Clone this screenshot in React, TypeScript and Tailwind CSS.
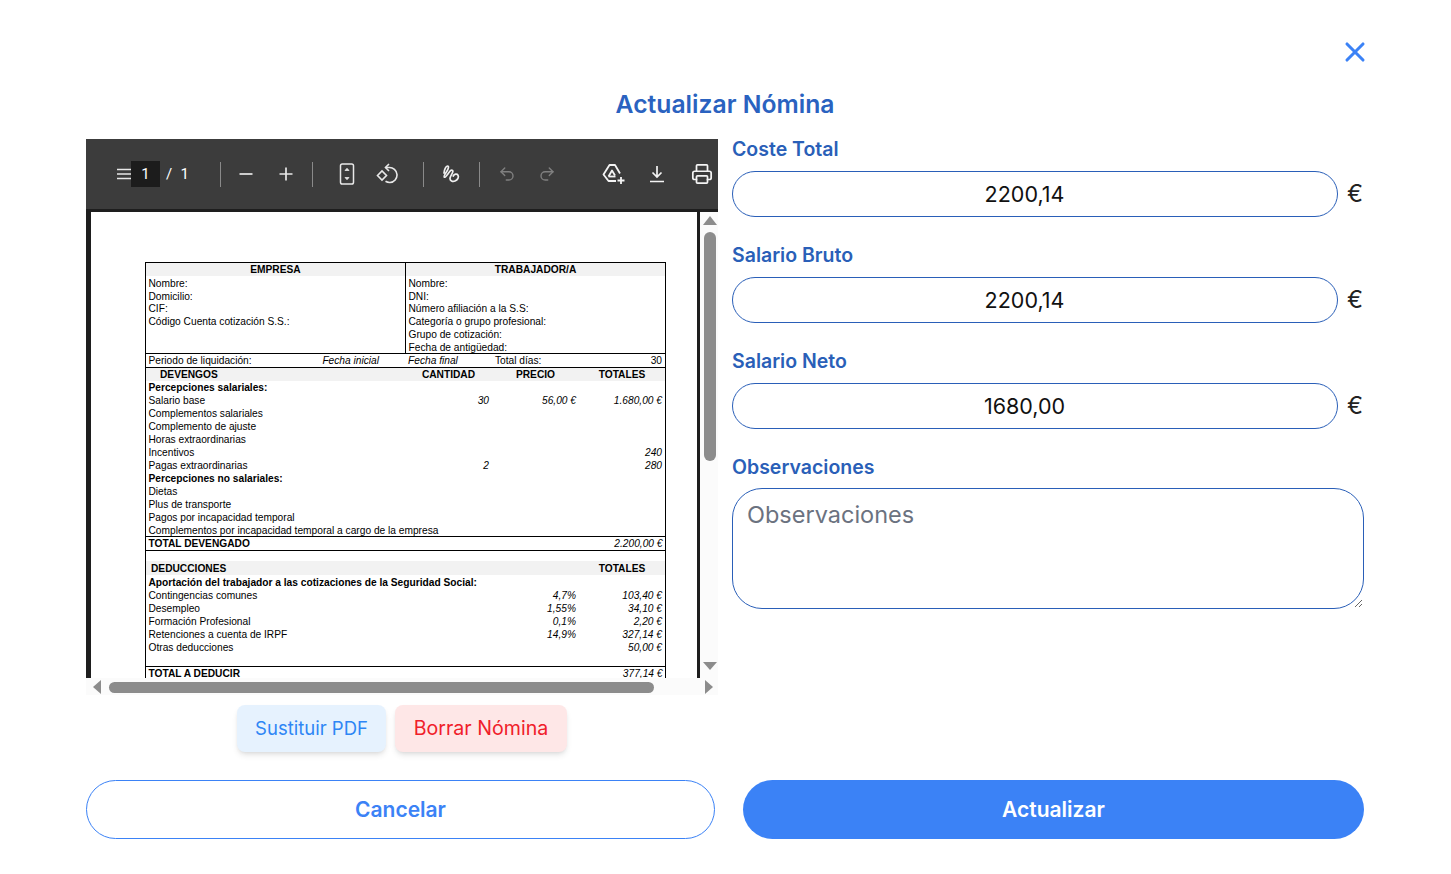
import { Printer, Redo2, Undo2, X } from 'lucide-react';

const UI_FONT = 'font-["Inter","Noto_Sans",sans-serif]';

const earnings: [string, boolean, string, string, string][] = [
  ['Percepciones salariales:', true, '', '', ''],
  ['Salario base', false, '30', '56,00 €', '1.680,00 €'],
  ['Complementos salariales', false, '', '', ''],
  ['Complemento de ajuste', false, '', '', ''],
  ['Horas extraordinarias', false, '', '', ''],
  ['Incentivos', false, '', '', '240'],
  ['Pagas extraordinarias', false, '2', '', '280'],
  ['Percepciones no salariales:', true, '', '', ''],
  ['Dietas', false, '', '', ''],
  ['Plus de transporte', false, '', '', ''],
  ['Pagos por incapacidad temporal', false, '', '', ''],
  ['Complementos por incapacidad temporal a cargo de la empresa', false, '', '', ''],
];

const deductions: [string, boolean, string, string][] = [
  ['Aportación del trabajador a las cotizaciones de la Seguridad Social:', true, '', ''],
  ['Contingencias comunes', false, '4,7%', '103,40 €'],
  ['Desempleo', false, '1,55%', '34,10 €'],
  ['Formación Profesional', false, '0,1%', '2,20 €'],
  ['Retenciones a cuenta de IRPF', false, '14,9%', '327,14 €'],
  ['Otras deducciones', false, '', '50,00 €'],
];

function PayRow({ label, bold, a, b, c }: { label: string; bold?: boolean; a?: string; b?: string; c?: string }) {
  return (
    <div className="grid h-[13px] grid-cols-[259px_87px_87px_86px] items-center leading-[13px]">
      <span className={`pl-[2.5px] whitespace-nowrap ${bold ? 'font-bold' : ''}`}>{label}</span>
      <span className="pr-[3px] text-right italic">{a}</span>
      <span className="pr-[3px] text-right italic">{b}</span>
      <span className="pr-[3px] text-right italic">{c}</span>
    </div>
  );
}

function Payslip() {
  return (
    <div className='ml-[54px] mt-[50px] w-[521px] border border-black font-["Liberation_Sans",Arial,sans-serif] text-[10.2px] text-black'>
      <div className="grid grid-cols-[260px_259px]">
        <div className="border-r border-black">
          <div className="h-[13px] bg-[#f2f2f2] text-center font-bold leading-[13px]">EMPRESA</div>
          <div className="h-[77px] pt-[2px] pl-[2.5px] leading-[12.7px]">
            <p>Nombre:</p>
            <p>Domicilio:</p>
            <p>CIF:</p>
            <p>Código Cuenta cotización S.S.:</p>
          </div>
        </div>
        <div>
          <div className="h-[13px] bg-[#f2f2f2] text-center font-bold leading-[13px]">TRABAJADOR/A</div>
          <div className="h-[77px] pt-[2px] pl-[2.5px] leading-[12.7px]">
            <p>Nombre:</p>
            <p>DNI:</p>
            <p>Número afiliación a la S.S:</p>
            <p>Categoría o grupo profesional:</p>
            <p>Grupo de cotización:</p>
            <p>Fecha de antigüedad:</p>
          </div>
        </div>
      </div>
      <div className="grid h-[14px] grid-cols-[259px_87px_87px_86px] items-center border-t border-black leading-[13px]">
        <div className="flex justify-between pr-[26px] pl-[2.5px]">
          <span>Periodo de liquidación:</span>
          <span className="italic">Fecha inicial</span>
        </div>
        <span className="pl-[3px] italic">Fecha final</span>
        <span className="pl-[3px]">Total días:</span>
        <span className="pr-[3px] text-right">30</span>
      </div>
      <div className="grid h-[14px] grid-cols-[259px_87px_87px_86px] items-center border-t border-black bg-[#f2f2f2] font-bold leading-[13px]">
        <span className="pl-[14px]">DEVENGOS</span>
        <span className="text-center">CANTIDAD</span>
        <span className="text-center">PRECIO</span>
        <span className="text-center">TOTALES</span>
      </div>
      <div className="h-[155px]">
        {earnings.map(([label, bold, a, b, c]) => (
          <PayRow key={label} label={label} bold={bold} a={a} b={b} c={c} />
        ))}
      </div>
      <div className="box-content flex h-[13px] items-center justify-between border-y border-black px-[2.5px] leading-[12px]">
        <span className="font-bold">TOTAL DEVENGADO</span>
        <span className="italic">2.200,00 €</span>
      </div>
      <div className="mt-[10px] grid h-[14px] grid-cols-[259px_87px_87px_86px] items-center bg-[#f2f2f2] font-bold leading-[13px]">
        <span className="pl-[5px]">DEDUCCIONES</span>
        <span />
        <span />
        <span className="text-center">TOTALES</span>
      </div>
      <div className="h-[91px] pt-[1px]">
        {deductions.map(([label, bold, b, c]) => (
          <PayRow key={label} label={label} bold={bold} b={b} c={c} />
        ))}
      </div>
      <div className="box-content flex h-[13px] items-center justify-between border-t border-black px-[2.5px] leading-[12px]">
        <span className="font-bold">TOTAL A DEDUCIR</span>
        <span className="italic">377,14 €</span>
      </div>
    </div>
  );
}

function ToolButton({ className = '', children }: { className?: string; children: React.ReactNode }) {
  return <div className={`flex h-[26px] w-[40px] shrink-0 items-center justify-center ${className}`}>{children}</div>;
}

function Separator({ className = '' }: { className?: string }) {
  return <div className={`h-[25px] w-px shrink-0 bg-[#8a8a8a] ${className}`} />;
}

function PdfToolbar() {
  return (
    <div className='flex h-[70px] shrink-0 items-center overflow-hidden bg-[#3c3c3c] pl-[31px] font-["Roboto",sans-serif] text-[15px] text-white'>
      <svg width="14" height="12" viewBox="0 0 14 12" className="shrink-0" stroke="#e8e8e8" strokeWidth="1.6">
        <path d="M0 1.5h14M0 6h14M0 10.500h14" />
      </svg>
      <div className="flex h-[26px] w-[29px] shrink-0 items-center justify-center bg-[#1c1c1c]">1</div>
      <div className="flex w-[30px] shrink-0 justify-between pr-[1px] pl-[6px]">
        <span>/</span>
        <span>1</span>
      </div>
      <Separator className="ml-[30px]" />
      <ToolButton className="ml-[5px]">
        <svg width="14" height="14" viewBox="0 0 14 14" stroke="#e8e8e8" strokeWidth="1.7">
          <path d="M0.500 7h13" />
        </svg>
      </ToolButton>
      <ToolButton>
        <svg width="14" height="14" viewBox="0 0 14 14" stroke="#e8e8e8" strokeWidth="1.7">
          <path d="M0.500 7h13M7 0.500v13" />
        </svg>
      </ToolButton>
      <Separator className="ml-[6px] w-[2px]" />
      <ToolButton className="ml-[14px]">
        <svg width="16" height="22" viewBox="0 0 16 22" fill="none" stroke="#e8e8e8" strokeWidth="1.5">
          <rect x="1.500" y="1" width="13" height="20" rx="1.800" />
          <path d="M6 7.500l2-2.200 2 2.200zM6 14.500l2 2.200 2-2.200z" fill="#e8e8e8" strokeWidth="0.800" />
        </svg>
      </ToolButton>
      <ToolButton>
        <svg width="22" height="22" viewBox="0 0 22 22" fill="none" stroke="#e8e8e8" strokeWidth="1.6">
          <path d="M1.500 12.500l4.500-4.500 4.500 4.500-4.500 4.500z" />
          <path d="M9.500 4.500h3.500a7.500 7.500 0 0 1 1 15 8 8 0 0 1-4.500-1.200" />
          <path d="M13 1l-3.500 3.500 3.500 3.500" />
        </svg>
      </ToolButton>
      <Separator className="ml-[16px]" />
      <ToolButton className="ml-[8px]">
        <svg width="20" height="20" viewBox="0 0 20 20" fill="none" stroke="#f0f0f0" strokeWidth="1.700" strokeLinecap="round" strokeLinejoin="round">
          <path d="M2 9c.2-3 1.800-7 3.500-7 1.800 0 .8 3.200-.8 5.500C3 10 1.500 12.500 2.300 13.200c1.200.8 3.500-3.500 5.700-6 1.500-1.500 3.300-1.300 2.800.7-.5 2-2.800 4.500-2.800 6.600 0 2.200 2.500 3.500 5 2.500 2.500-1 4.200-3.800 3-5.800-1-1.700-3.800-1.200-4.800.8" />
        </svg>
      </ToolButton>
      <Separator className="ml-[7px]" />
      <ToolButton className="ml-[7px]">
        <Undo2 size={18} color="#808080" strokeWidth={1.8} />
      </ToolButton>
      <ToolButton>
        <Redo2 size={18} color="#808080" strokeWidth={1.8} />
      </ToolButton>
      <ToolButton className="ml-[26px]">
        <svg width="23" height="21" viewBox="0 0 23 21" fill="none" stroke="#f4f4f4" strokeWidth="1.800" strokeLinejoin="round">
          <path d="M14 17H6.500L1.500 10.500 7.500 1h5.500l5 8.500" />
          <path d="M6.500 12.500l3.500-6 3 5" />
          <path d="M6.500 12.500h7" />
          <path d="M19 13v7M15.500 16.500h7" />
        </svg>
      </ToolButton>
      <ToolButton className="ml-[4px]">
        <svg width="18" height="18" viewBox="0 0 18 18" fill="none" stroke="#f4f4f4" strokeWidth="1.700">
          <path d="M9 1v10.500M4.500 7.500L9 12l4.500-4.500M2 16.500h14" />
        </svg>
      </ToolButton>
      <ToolButton className="ml-[5px]">
        <Printer size={22} color="#f4f4f4" strokeWidth={1.9} />
      </ToolButton>
    </div>
  );
}

function PdfViewer() {
  return (
    <div className="flex h-[556px] w-[632px] flex-col">
      <PdfToolbar />
      <div className="h-[3px] shrink-0 bg-[#1e1e1e]" />
      <div className="flex h-[466px] shrink-0">
        <div className="flex h-[466px] w-[614px] shrink-0 border-x-[#1e1e1e] border-r-[3px] border-l-[5px]">
          <div className="w-full overflow-hidden bg-white">
            <Payslip />
          </div>
        </div>
        <div className="flex w-[18px] flex-col items-center bg-[#fbfbfb] pt-[4px] pl-[2px]">
          <div className="h-0 w-0 border-x-[7px] border-b-[9px] border-x-transparent border-b-[#8c8c8c]" />
          <div className="mt-[7px] h-[229px] w-[12px] rounded-full bg-[#8c8c8c]" />
          <div className="mt-[201px] h-0 w-0 border-x-[7px] border-t-[8px] border-x-transparent border-t-[#8c8c8c]" />
        </div>
      </div>
      <div className="flex h-[17px] shrink-0 items-center bg-[#fbfbfb] pt-[1px] pl-[7px]">
        <div className="h-0 w-0 border-y-[7px] border-r-[8px] border-y-transparent border-r-[#8c8c8c]" />
        <div className="ml-[8px] h-[11px] w-[545px] rounded-full bg-[#8c8c8c]" />
        <div className="ml-[51px] h-0 w-0 border-y-[7px] border-l-[8px] border-y-transparent border-l-[#8c8c8c]" />
      </div>
    </div>
  );
}

function AmountField({ label, value }: { label: string; value: string }) {
  return (
    <div className="mb-[14px] h-[92px]">
      <label className="block h-[32px] text-[19.5px] leading-[20px] font-semibold text-[#2a5fb8]">{label}</label>
      <div className="flex items-center">
        <input
          readOnly
          value={value}
          className="h-[46px] w-[606px] rounded-full border border-[#2a5fb8] bg-white pr-[21px] pb-[1px] text-center text-[21.5px] text-[#111] outline-none"
        />
        <span className="ml-[9px] text-[24px] leading-[24px] text-[#222]">€</span>
      </div>
    </div>
  );
}

export default function App() {
  return (
    <div className={`min-h-screen bg-white pt-[42px] pr-[87px] pl-[86px] ${UI_FONT}`}>
      <div className="flex justify-end">
        <X size={32} color="#3b82f6" strokeWidth={2.3} className="-m-[6.500px]" />
      </div>
      <h1 className="mt-[28px] h-[50px] text-center text-[24.7px] leading-[30px] font-semibold text-[#2a62c0]">
        Actualizar Nómina
      </h1>
      <div className="flex">
        <div className="w-[632px]">
          <PdfViewer />
          <div className="mt-[10px] flex justify-center gap-[9px]">
            <button className="h-[47px] w-[149px] rounded-lg bg-[#e6f2fe] pt-[1px] text-[18.5px] text-[#2e86f5] shadow-md">Sustituir PDF</button>
            <button className="h-[47px] w-[172px] rounded-lg bg-[#fee7e7] pt-[1px] text-[19.6px] text-[#f0202a] shadow-md">Borrar Nómina</button>
          </div>
        </div>
        <div className="ml-[14px] w-[632px]">
          <AmountField label="Coste Total" value="2200,14" />
          <AmountField label="Salario Bruto" value="2200,14" />
          <AmountField label="Salario Neto" value="1680,00" />
          <label className="block h-[31px] text-[19.5px] leading-[20px] font-semibold text-[#2a5fb8]">
            Observaciones
          </label>
          <textarea
            placeholder="Observaciones"
            className="block h-[121px] w-[632px] rounded-[30px] border border-[#2a5fb8] bg-white px-[14px] py-[8px] text-[23.5px] outline-none placeholder:text-[#6b7280]"
          />
        </div>
      </div>
      <div className="mt-[28px] flex gap-[28px] text-[21px] font-semibold">
        <button className="h-[59px] w-[629px] rounded-full border border-[#3b82f6] bg-white text-[#3b82f6]">Cancelar</button>
        <button className="h-[59px] w-[621px] rounded-full bg-[#3b82f6] text-white">Actualizar</button>
      </div>
    </div>
  );
}
